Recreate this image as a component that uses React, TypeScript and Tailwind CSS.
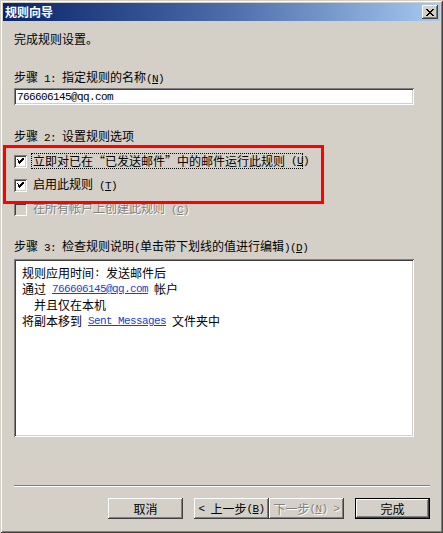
import type { ReactNode } from 'react'

const raised =
  'shadow-[inset_-1px_-1px_#404040,inset_1px_1px_#ffffff,inset_-2px_-2px_#808080,inset_2px_2px_#d4d0c8]'
const sunken =
  'shadow-[inset_1px_1px_#808080,inset_-1px_-1px_#ffffff,inset_2px_2px_#404040,inset_-2px_-2px_#d4d0c8]'

// half-width latin, SimSun style 6px per char
function M({ children, className = '' }: { children: ReactNode; className?: string }) {
  return (
    <span
      className={`whitespace-pre font-['Liberation_Mono',monospace] text-[11px] tracking-[-0.6px] ${className}`}
    >
      {children}
    </span>
  )
}

function Key({ k }: { k: string }) {
  return (
    <M>
      (<span className="underline">{k}</span>)
    </M>
  )
}

function Check({ checked, disabled }: { checked?: boolean; disabled?: boolean }) {
  return (
    <span
      className={`flex h-[13px] w-[13px] shrink-0 items-center justify-center ${sunken} ${
        disabled ? 'bg-[#d4d0c8]' : 'bg-white'
      }`}
    >
      {checked && (
        <svg width="7" height="7" viewBox="0 0 7 7" shapeRendering="crispEdges">
          <path d="M0 2h1v3h1v1h1v-1h1v-1h1v-1h1v-1h1v-3h-1v1h-1v1h-1v1h-1v1h-1v-1h-1v-1h-1z" fill="#000" />
        </svg>
      )}
    </span>
  )
}

function Btn({
  children,
  disabled,
  def,
}: {
  children: ReactNode
  disabled?: boolean
  def?: boolean
}) {
  return (
    <div
      className={`flex h-[21px] w-[75px] items-center justify-center whitespace-nowrap bg-[#d4d0c8] text-[12px] leading-[12px] ${
        def
          ? 'shadow-[inset_0_0_0_1px_#000,inset_-2px_-2px_#404040,inset_2px_2px_#ffffff,inset_-3px_-3px_#808080]'
          : raised
      } ${disabled ? 'text-[#808080] [text-shadow:1px_1px_#fff]' : 'text-black'}`}
    >
      {children}
    </div>
  )
}

export default function App() {
  return (
    <div
      className={`relative flex h-[533px] w-[443px] flex-col whitespace-nowrap bg-[#d4d0c8] p-[3px] font-['Noto_Sans_CJK_SC',sans-serif] text-[12px] leading-[12px] text-black shadow-[inset_1px_1px_#d4d0c8,inset_-1px_-1px_#404040,inset_2px_2px_#ffffff,inset_-2px_-2px_#808080]`}
    >
      {/* title bar */}
      <div className="flex h-[18px] items-center justify-between bg-linear-to-r from-[#0a246a] via-[#4a6aa8] to-[#a6caf0] pl-[2px] pr-[2px]">
        <span className="font-bold text-white">规则向导</span>
        <div className={`flex h-[14px] w-[16px] items-center justify-center bg-[#d4d0c8] ${raised}`}>
          <svg width="8" height="7" viewBox="0 0 8 7" shapeRendering="crispEdges">
            <path
              d="M0 0h2v1h1v1h2v-1h1v-1h2v1h-1v1h-1v1h-1v1h1v1h1v1h1v1h-2v-1h-1v-1h-2v1h-1v1h-2v-1h1v-1h1v-1h1v-1h-1v-1h-1v-1h-1z"
              fill="#000"
            />
          </svg>
        </div>
      </div>

      <div className="flex flex-1 flex-col pl-[11px] pr-[10px]">
        <div className="mt-[12px] h-[12px]">完成规则设置。</div>

        <div className="mt-[26px] h-[12px]">
          步骤<M> 1: </M>指定规则的名称<Key k="N" />
        </div>
        <div className={`mt-[5px] flex h-[17px] w-[400px] items-center bg-white pl-[3px] ${sunken}`}>
          <M>766606145@qq.com</M>
        </div>

        <div className="mt-[25px] h-[12px]">
          步骤<M> 2: </M>设置规则选项
        </div>

        <div className="mt-[11px] flex h-[16px] items-center gap-[4px]">
          <Check checked />
          <span className="flex h-[16px] w-[272px] items-center border border-dotted border-black pl-[1px]">
            立即对已在“已发送邮件”中的邮件运行此规则<M> </M>
            <Key k="U" />
          </span>
        </div>
        <div className="mt-[8px] flex h-[16px] items-center gap-[4px]">
          <Check checked />
          <span className="pl-[2px]">
            启用此规则<M> </M>
            <Key k="T" />
          </span>
        </div>
        <div className="mt-[8px] flex h-[16px] items-center gap-[4px] text-[#808080] [text-shadow:1px_1px_#fff]">
          <Check disabled />
          <span className="pl-[2px]">
            在所有帐户上创建此规则<M> </M>
            <Key k="C" />
          </span>
        </div>

        <div className="mt-[23px] h-[12px]">
          步骤<M> 3: </M>检查规则说明<M>(</M>单击带下划线的值进行编辑<M>)</M>
          <Key k="D" />
        </div>
        <div className={`mt-[7px] flex h-[178px] w-[400px] flex-col bg-white pl-[8px] pt-[6px] ${sunken}`}>
          <div className="flex h-[16px] items-center">
            规则应用时间<M>: </M>发送邮件后
          </div>
          <div className="flex h-[16px] items-center">
            通过<M> </M>
            <M className="text-[#1f3fc0] underline">766606145@qq.com</M>
            <M> </M>帐户
          </div>
          <div className="flex h-[16px] items-center pl-[12px]">并且仅在本机</div>
          <div className="flex h-[16px] items-center">
            将副本移到<M> </M>
            <M className="text-[#1f3fc0] underline">Sent Messages</M>
            <M> </M>文件夹中
          </div>
        </div>

        <div className="mt-[48px] h-[2px] w-[416px] border-t border-b border-t-[#808080] border-b-white" />

        <div className="mt-[11px] flex justify-end">
          <Btn>取消</Btn>
          <div className="ml-[11px] flex">
            <Btn>
              <M>&lt; </M>上一步<Key k="B" />
            </Btn>
            <Btn disabled>
              下一步<Key k="N" />
              <M> &gt;</M>
            </Btn>
          </div>
          <div className="ml-[11px]">
            <Btn def>完成</Btn>
          </div>
        </div>
      </div>

      {/* red annotation box */}
      <div className="pointer-events-none absolute left-[3px] top-[145px] h-[59px] w-[321px] border-[3px] border-[#ff0000]" />
    </div>
  )
}
